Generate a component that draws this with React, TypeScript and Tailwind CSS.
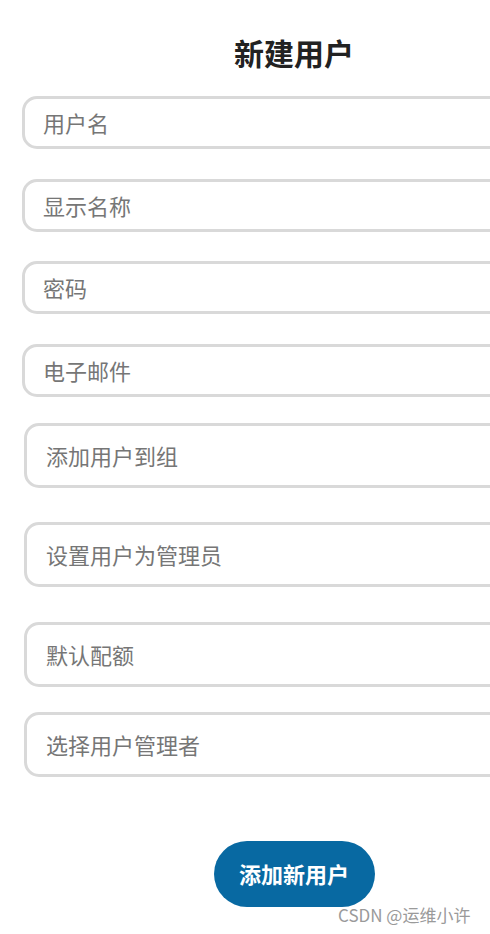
import React from "react";

const font = { fontFamily: '"Noto Sans CJK SC", "Noto Sans", sans-serif' };

function Field({ label, tall, className }: { label: string; tall?: boolean; className?: string }) {
  return (
    <div
      className={
        "flex items-center rounded-[15px] border-[3px] border-[#d9d9d9] bg-white " +
        (tall ? "h-[65px] ml-[24px] mr-[24px] pl-[19px] " : "h-[53px] ml-[22px] mr-[22px] pl-[18px] ") +
        (className ?? "")
      }
    >
      <input
        placeholder={label}
        className="w-full bg-transparent text-[22px] text-[#333] outline-none placeholder:text-[#767676]"
        style={font}
      />
    </div>
  );
}

export default function App() {
  return (
    <div className="relative h-[934px] w-[490px] overflow-hidden bg-white" style={font}>
      <div className="flex w-[588px] flex-col">
        <h1 className="pt-[33px] text-center text-[30px] font-bold leading-[38px] text-[#222]">新建用户</h1>
        <div className="mt-[25px] flex flex-col gap-[29.5px]">
          <Field label="用户名" />
          <Field label="显示名称" />
          <Field label="密码" />
          <Field label="电子邮件" />
        </div>
        <Field label="添加用户到组" tall className="mt-[26px]" />
        <Field label="设置用户为管理员" tall className="mt-[34px]" />
        <Field label="默认配额" tall className="mt-[35px]" />
        <Field label="选择用户管理者" tall className="mt-[25px]" />
        <div className="mt-[64px] flex justify-center">
          <button className="h-[66px] w-[161px] rounded-full bg-[#0869a2] text-[22px] font-bold text-white">
            添加新用户
          </button>
        </div>
      </div>
      <div className="absolute left-[338px] top-[903px] text-[17px] leading-[24px] text-[#9a9a9a]">
        CSDN @运维小许
      </div>
    </div>
  );
}
